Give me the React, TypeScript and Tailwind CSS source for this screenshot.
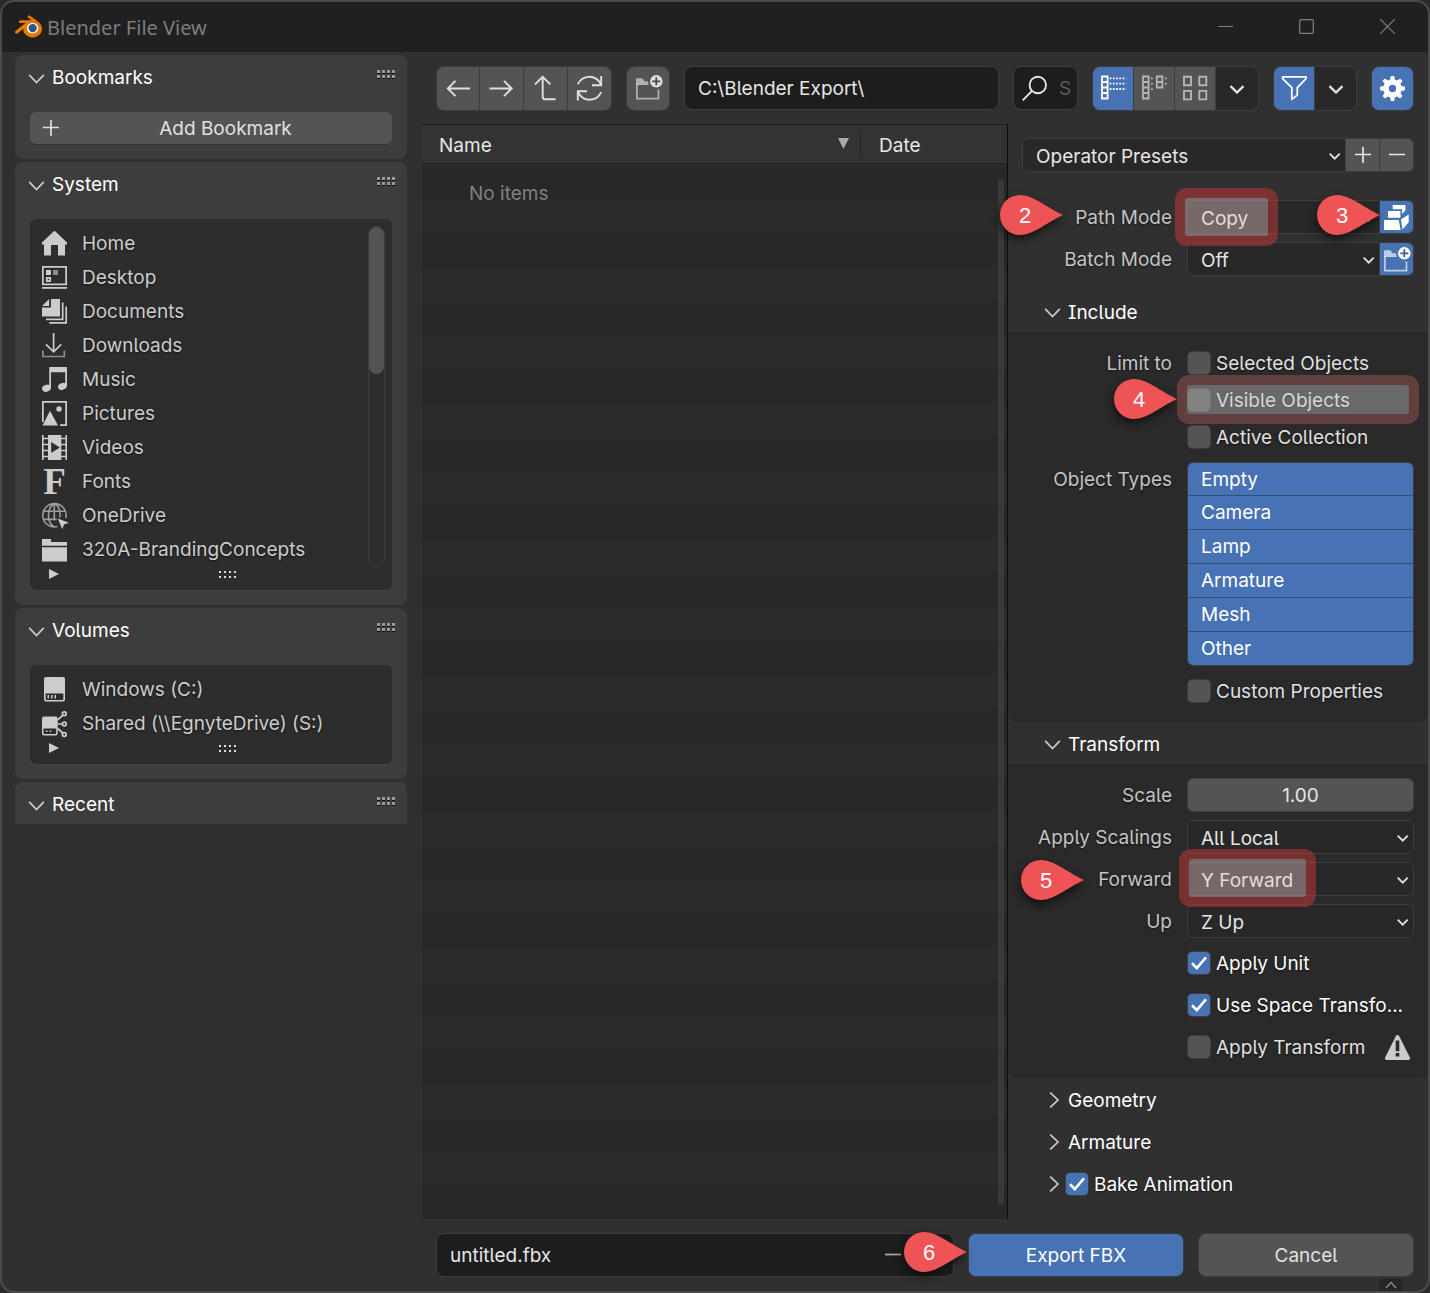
import React, { useState } from "react";

type IconProps = { className?: string };

/* ---------- Icons ---------- */

const Chevron = ({ className = "" }: IconProps) => (
  <svg width="16" height="16" viewBox="0 0 16 16" fill="none" stroke="currentColor" strokeWidth="1.7" className={`shrink-0 overflow-visible ${className}`}>
    <path d="M1.2 4.8 8.500 12.600l7.300-7.800" />
  </svg>
);

const ChevronRight = () => (
  <svg width="16" height="16" viewBox="0 0 16 16" fill="none" stroke="currentColor" strokeWidth="1.7" className="shrink-0">
    <path d="M6.200.6 14 8l-7.800 7.400" />
  </svg>
);

const ChevronBold = () => (
  <svg width="16" height="16" viewBox="0 0 16 16" fill="none" stroke="currentColor" strokeWidth="2.3">
    <path d="M1.500 6.200 8 12.500 14.500 6.200" />
  </svg>
);

const ChevronSmall = ({ className = "" }: IconProps) => (
  <svg width="12" height="12" viewBox="0 0 12 12" fill="none" stroke="currentColor" strokeWidth="1.9" className={className}>
    <path d="M.7 3.700l5 5 5-5" />
  </svg>
);

const Plus = () => (
  <svg width="16" height="16" viewBox="0 0 16 16" fill="none" stroke="currentColor" strokeWidth="1.7">
    <path d="M8 0v16M0 7.500h16" />
  </svg>
);

const Minus = () => (
  <svg width="16" height="16" viewBox="0 0 16 16" fill="none" stroke="currentColor" strokeWidth="1.7">
    <path d="M0 7.500h16" />
  </svg>
);

const BlenderLogo = () => (
  <svg width="27" height="27" viewBox="0 0 24 24" aria-hidden="true" className="mb-[2px]">
    <circle cx="15.700" cy="13.300" r="6.200" fill="#fff" />
    <circle cx="15.700" cy="13.400" r="3.700" fill="#265787" />
    <path
      fill="#ea7600"
      fillRule="evenodd"
      d="M7.350 14.831c.006.314.106.922.256 1.398a7.372 7.372 0 0 0 1.593 2.757 8.227 8.227 0 0 0 2.787 2.001 8.947 8.947 0 0 0 3.660.760 8.964 8.964 0 0 0 3.657-.772 8.285 8.285 0 0 0 2.785-2.010 7.428 7.428 0 0 0 1.592-2.762 6.964 6.964 0 0 0 .250-3.074 7.123 7.123 0 0 0-1.016-2.779 7.764 7.764 0 0 0-1.852-2.043h.002L13.566 2.550l-.020-.015c-.492-.378-1.319-.376-1.860.002-.547.382-.609 1.015-.123 1.415l-.001.001 3.126 2.543-9.530.010h-.013c-.788.001-1.545.518-1.695 1.172-.154.665.380 1.217 1.200 1.220V8.900l4.830-.010-8.620 6.617-.034.025c-.813.622-1.075 1.658-.563 2.313.520.667 1.625.668 2.447.004L7.414 14s-.069.520-.063.831zm12.090 1.741c-.970.988-2.326 1.548-3.795 1.550-1.470.004-2.827-.552-3.797-1.538a4.510 4.510 0 0 1-1.036-1.622 4.282 4.282 0 0 1 .282-3.519 4.702 4.702 0 0 1 1.153-1.371c.942-.768 2.141-1.183 3.396-1.185 1.256-.002 2.455.410 3.398 1.175.480.391.870.854 1.152 1.367a4.280 4.280 0 0 1 .522 1.706 4.236 4.236 0 0 1-.239 1.811 4.540 4.540 0 0 1-1.035 1.626"
    />
  </svg>
);

const Icon25 = ({ children }: { children: React.ReactNode }) => (
  <svg width="25" height="25" viewBox="0 0 25 25" className="shrink-0 overflow-visible" aria-hidden="true">
    {children}
  </svg>
);

const HomeIcon = () => (
  <Icon25>
    <path fill="currentColor" d="M11.300.700a1.700 1.700 0 0 1 2.400 0L25 11.600V13.500h-2V24.600h-7V14H9v10.600H2V13.500H0v-1.900z" />
  </Icon25>
);

const DesktopIcon = () => (
  <Icon25>
    <path fill="none" stroke="currentColor" strokeWidth="1.700" d="M.85 1.850h23.300v17.500H.85z" />
    <path fill="currentColor" d="M4 5h5v5H4zM0 22h25v1.700H0z" />
    <path fill="currentColor" opacity=".6" d="M11 5h5v5h-5z" />
    <path fill="none" stroke="currentColor" strokeWidth="1.700" d="M4.800 12.800h3.400v3.400H4.800z" />
  </Icon25>
);

const DocumentsIcon = () => (
  <Icon25>
    <path fill="currentColor" d="M9 0h9V17.500H0V8.500h9zM0 7l7.200-7v7z" />
    <path fill="none" stroke="currentColor" strokeWidth="1.700" d="M20.700 3.500v16.800H4M24.200 7.500v16.300H7.300" />
  </Icon25>
);

const DownloadsIcon = () => (
  <Icon25>
    <g fill="none" stroke="currentColor" strokeWidth="1.700">
      <path d="M11.600 0v19M4 11.300l7.600 7.500 7.600-7.500" />
      <path opacity=".6" d="M.850 17.500v6h21.500v-6" />
    </g>
  </Icon25>
);

const MusicIcon = () => (
  <Icon25>
    <path fill="currentColor" d="M7.300 0H25v19h-1.800V5.300H9V21H7.300z" />
    <ellipse cx="4.500" cy="21.200" rx="4.500" ry="3.400" fill="currentColor" transform="rotate(-20 4.500 21.200)" />
    <ellipse cx="20.400" cy="19.400" rx="4.500" ry="3.400" fill="currentColor" transform="rotate(-20 20.400 19.400)" />
  </Icon25>
);

const PicturesIcon = () => (
  <Icon25>
    <path fill="none" stroke="currentColor" strokeWidth="1.700" d="M.850 21V.850h23.300v23.300H18" />
    <path fill="currentColor" d="M8 9.800 16 24.500H.5z" />
    <circle cx="17" cy="8" r="2.700" fill="currentColor" />
  </Icon25>
);

const VideosIcon = () => (
  <Icon25>
    <path fill="currentColor" fillRule="evenodd" d="M6 0h13.300v25H6zM9.200 7v11l8.600-5.500z" />
    <path fill="none" stroke="currentColor" strokeWidth="1.600" d="M.8 0v25M24.200 0v25M0 3.500h6M0 9.500h6M0 15.500h6M0 21.500h6M19 3.500h6M19 9.500h6M19 15.500h6M19 21.500h6" />
  </Icon25>
);

const FontsIcon = () => (
  <span aria-hidden="true" className="flex h-[25px] w-[25px] items-center justify-center font-['Liberation_Serif',serif] text-[37px] leading-none font-bold [text-shadow:none]">
    F
  </span>
);

const GlobeIcon = () => (
  <Icon25>
    <g fill="none" stroke="currentColor" strokeWidth="1.600" opacity=".7">
      <path d="M15.500 23.600A11.700 11.700 0 1 1 23.800 15M1.500 8.200h21.600M1.500 16.400h13.200M12.300.8v15M17.800 14.500C18.700 8.500 17 2.500 12.300.800 4.500 5 4.500 19.500 12.300 24" />
    </g>
    <path fill="currentColor" d="M15.800 15.500l11 4.200-4.800 1.800-1.800 4.800z" />
  </Icon25>
);

const FolderIcon = () => (
  <Icon25>
    <path fill="currentColor" d="M0 2h9V5h16v3.700H0zM0 10.200h25V24.500H0z" />
  </Icon25>
);

const DiskIcon = () => (
  <Icon25>
    <path fill="currentColor" fillRule="evenodd" d="M4 0h17a2 2 0 0 1 2 2v20.600a2 2 0 0 1-2 2H4a2 2 0 0 1-2-2V2a2 2 0 0 1 2-2zM3.600 16.500v5.300a1.200 1.200 0 0 0 1.200 1.200h15.400a1.200 1.200 0 0 0 1.200-1.200v-5.300z" />
    <path fill="currentColor" d="M5.500 18h1.500v3.400H5.500zM9 18h1.500v3.400H9zM12.500 18H14v3.400h-1.500z" />
  </Icon25>
);

const SharedDiskIcon = () => (
  <Icon25>
    <path fill="currentColor" fillRule="evenodd" d="M2 5.500h11.700a2 2 0 0 1 2 2v15a2 2 0 0 1-2 2H2a2 2 0 0 1-2-2v-15a2 2 0 0 1 2-2zM1.500 17.500v4.500a1 1 0 0 0 1 1h10.700a1 1 0 0 0 1-1v-4.500z" />
    <path fill="currentColor" d="M3.800 19.400h1.600V21H3.800zM7.600 19.400h1.600V21H7.600z" />
    <g fill="none" stroke="currentColor" strokeWidth="1.700">
      <path d="M15.700 8.800l5-4.500M15.700 13h4.600M15.700 17.500l5 4.500" />
      <circle cx="22.300" cy="2.800" r="1.900" />
      <circle cx="22.300" cy="13" r="1.900" />
      <circle cx="22.300" cy="23.500" r="1.900" />
    </g>
  </Icon25>
);

const ArrowLeftIcon = () => (
  <Icon25>
    <path fill="none" stroke="currentColor" strokeWidth="1.900" d="M24 12.500H2M9.500 4.800 1.800 12.500l7.700 7.700" />
  </Icon25>
);

const ArrowRightIcon = () => (
  <Icon25>
    <path fill="none" stroke="currentColor" strokeWidth="1.900" d="M.5 12.500h22M15 4.800l7.700 7.700-7.700 7.700" />
  </Icon25>
);

const ParentIcon = () => (
  <Icon25>
    <path fill="none" stroke="currentColor" strokeWidth="1.900" d="M9.700 1v19.800a2.500 2.500 0 0 0 2.500 2.500H22.500M2 8.400 9.700.800l7.700 7.600" />
  </Icon25>
);

const RefreshIcon = () => (
  <Icon25>
    <path fill="none" stroke="currentColor" strokeWidth="1.900" d="M.8 8.200C5.500-1.500 18.500-1.800 24 8.300M24.200 0v9.200H15M24.200 16.200C19.500 26.200 6.500 26.500 1 16.100M.8 24.500v-9.200H10" />
  </Icon25>
);

const NewFolderIcon = ({ plus }: { plus: string }) => (
  <svg width="27" height="25" viewBox="0 0 27 25" aria-hidden="true" className="shrink-0">
    <path fill="currentColor" opacity=".65" d="M0 3.300h6.500l1.800 3h3.500l1 3.600H0z" />
    <path fill="none" stroke="currentColor" strokeWidth="1.700" opacity=".65" d="M.9 9v14.700h21.600V14.500" />
    <circle cx="20.300" cy="6.300" r="6.200" fill="currentColor" />
    <path d="M20.300 2.300v8M16.300 6.300h8" strokeWidth="1.800" fill="none" className={plus} />
  </svg>
);

const SearchIcon = () => (
  <Icon25>
    <g fill="none" stroke="currentColor" strokeWidth="1.900">
      <circle cx="15.800" cy="9" r="8.200" />
      <path d="M10 14.800.7 24.300" />
    </g>
  </Icon25>
);

const ListViewIcon = () => (
  <Icon25>
    <path fill="none" stroke="currentColor" strokeWidth="1.800" d="M1 .5h5.600v22H1zM1 6h5.600M1 11.500h5.600M1 17h5.600" />
    <path fill="none" stroke="currentColor" strokeWidth="1.800" strokeDasharray="1.700 1.500" d="M8.700 2.300H25M8.700 7.700H25M8.700 13H25" />
  </Icon25>
);

const DetailViewIcon = () => (
  <Icon25>
    <path fill="none" stroke="currentColor" strokeWidth="1.800" d="M1 .5h5.600v22H1zM1 6h5.600M1 11.500h5.600M1 17h5.600M14.800.5h5.600v11h-5.600zM14.800 6h5.600" />
    <path fill="currentColor" d="M9 1.500h1.800v1.800H9zM9 6.800h1.800v1.800H9zM9 12.200h1.800V14H9zM22.900 1.500h1.800v1.800h-1.800zM22.900 6.800h1.800v1.800h-1.800z" />
  </Icon25>
);

const ThumbViewIcon = () => (
  <Icon25>
    <path fill="none" stroke="currentColor" strokeWidth="1.900" d="M1 .8h7v8.500H1zM16.300.8h7v8.500h-7zM1 14.900h7v8.500H1zM16.300 14.900h7v8.500h-7z" />
  </Icon25>
);

const FunnelIcon = () => (
  <Icon25>
    <path fill="none" stroke="currentColor" strokeWidth="1.800" strokeLinejoin="round" d="M.6.800h23.400v1.800L15.300 11.600v7.500L9.800 23.400V11.600L.6 2.600z" />
  </Icon25>
);

const GearIcon = () => (
  <Icon25>
    <circle cx="12.500" cy="12.500" r="6.500" fill="none" stroke="currentColor" strokeWidth="5.600" />
    {[0, 45, 90, 135, 180, 225, 270, 315].map((a) => (
      <path key={a} fill="currentColor" d="M10 4.500 10.600.8a.8.8 0 0 1 .8-.8h2.200a.8.8 0 0 1 .8.8l.6 3.700z" transform={`rotate(${a} 12.500 12.500)`} />
    ))}
  </Icon25>
);

const EmbedIcon = () => (
  <Icon25>
    <path fill="currentColor" d="M8.700 0h12.700v5.500l-3.400 3.300v-4.500H8.700zM4 6h12.400v6.700H4zM0 15h14.800l1.800 10H0zM17 14.500l7.700-5V17.200L18.500 24.500z" />
  </Icon25>
);

const WarningIcon = () => (
  <Icon25>
    <path fill="currentColor" fillRule="evenodd" d="M10.900 1a1.800 1.800 0 0 1 3.200 0L24.900 22.500a1.700 1.700 0 0 1-1.500 2.500H1.600a1.700 1.700 0 0 1-1.500-2.500zM10.700 5.500v10.700h3.600V5.500zm0 12.400v3.600h3.600v-3.600z" />
  </Icon25>
);

/* ---------- Annotations ---------- */

function Callout({ n, className }: { n: number; className: string }) {
  return (
    <div className={`pointer-events-none absolute z-20 h-10 w-[63px] ${className}`}>
      <svg width="63" height="40" viewBox="0 0 63 40" className="absolute inset-0 overflow-visible drop-shadow-[-1px_4px_4px_rgba(0,0,0,0.6)]">
        <path fill="#ee5355" d="M20 0C33 0 46 12 63 20 46 28 33 40 20 40A20 20 0 0 1 20 0z" />
      </svg>
      <span className="absolute inset-y-0 left-0 flex w-[50px] items-center justify-center font-['Liberation_Sans',sans-serif] text-[22px] text-white [text-shadow:none]">{n}</span>
    </div>
  );
}

/* ---------- Sidebar ---------- */

function Grip() {
  return (
    <div className="grid grid-cols-4 gap-[2px]">
      {Array.from({ length: 8 }, (_, i) => (
        <i key={i} className="h-[3px] w-[3px] bg-[#999] shadow-[0_1px_0_#111]" />
      ))}
    </div>
  );
}

function Panel({ title, open = true, children }: { title: string; open?: boolean; children?: React.ReactNode }) {
  return (
    <section className={`bg-[#3d3d3d] ${open ? "rounded-lg pb-[15px]" : "rounded-t-lg"}`}>
      <header className="flex h-[42px] items-start pr-3 pl-[13px]">
        <button className="flex flex-1 items-center gap-2 pt-2 text-left text-white">
          <Chevron className="text-[#ccc]" />
          <h2>{title}</h2>
        </button>
        <div className="pt-[15px]">
          <Grip />
        </div>
      </header>
      {children && <div className="px-[15px] pt-[15px]">{children}</div>}
    </section>
  );
}

function FileLinks({ items, scroll }: { items: { label: string; icon: React.ReactNode }[]; scroll?: boolean }) {
  return (
    <div className="rounded-md bg-[#2d2d2d] pt-[7px] shadow-[0_1px_0_#444]">
      <div className="flex">
        <ul className="flex-1">
          {items.map((it) => (
            <li key={it.label}>
              <a href="#" className="flex h-[34px] items-center gap-[15px] pl-3 text-[#ccc]">
                {it.icon}
                <span>{it.label}</span>
              </a>
            </li>
          ))}
        </ul>
        {scroll && (
          <div className="mr-[7px] w-[17px] rounded-full border border-[#3d3d3d]">
            <div className="h-[147px] rounded-full bg-[#545454]" />
          </div>
        )}
      </div>
      <div className="flex h-6 items-start pt-[3px] pl-[18px]">
        <svg width="12" height="10" viewBox="0 0 12 10" className="text-[#ccc]">
          <path fill="currentColor" d="M1 0l10 5L1 10z" />
        </svg>
        <div className="ml-[159px] grid grid-cols-4 gap-[3px] pt-[2px]">
          {Array.from({ length: 8 }, (_, i) => (
            <i key={i} className="h-[2px] w-[2px] bg-[#ddd]" />
          ))}
        </div>
      </div>
    </div>
  );
}

const systemItems = [
  { label: "Home", icon: <HomeIcon /> },
  { label: "Desktop", icon: <DesktopIcon /> },
  { label: "Documents", icon: <DocumentsIcon /> },
  { label: "Downloads", icon: <DownloadsIcon /> },
  { label: "Music", icon: <MusicIcon /> },
  { label: "Pictures", icon: <PicturesIcon /> },
  { label: "Videos", icon: <VideosIcon /> },
  { label: "Fonts", icon: <FontsIcon /> },
  { label: "OneDrive", icon: <GlobeIcon /> },
  { label: "320A-BrandingConcepts", icon: <FolderIcon /> },
];

const volumeItems = [
  { label: "Windows (C:)", icon: <DiskIcon /> },
  { label: "Shared (\\\\EgnyteDrive) (S:)", icon: <SharedDiskIcon /> },
];

/* ---------- Form parts ---------- */

function Row({ label, htmlFor, children }: { label: string; htmlFor: string; children: React.ReactNode }) {
  return (
    <div className="grid grid-cols-[150px_1fr] gap-[15px]">
      <label htmlFor={htmlFor} className="self-center text-right whitespace-nowrap text-[#c4c4c4]">
        {label}
      </label>
      {children}
    </div>
  );
}

function Select({ id, value, label, joined }: { id: string; value: string; label?: string; joined?: boolean }) {
  return (
    <div className="relative min-w-0 flex-1">
      <select
        id={id}
        aria-label={label}
        defaultValue={value}
        className={`h-[34px] w-full appearance-none border border-[#3d3d3d] bg-[#282828] pt-[2px] pr-8 pl-[13px] text-[#e6e6e6] ${joined ? "rounded-l-md" : "rounded-md"}`}
      >
        <option>{value}</option>
      </select>
      <ChevronSmall className="pointer-events-none absolute top-3 right-[5px] text-[#e0e0e0]" />
    </div>
  );
}

function Check({ label, checked = false, bright }: { label: string; checked?: boolean; bright?: boolean }) {
  const [on, setOn] = useState(checked);
  return (
    <label className={`flex h-6 items-center gap-[5px] whitespace-nowrap ${bright ? "text-white" : "text-[#e0e0e0]"}`}>
      <span className="relative h-6 w-6">
        <input
          type="checkbox"
          checked={on}
          onChange={() => setOn(!on)}
          className="block h-6 w-6 appearance-none rounded-[5px] border border-[#3d3d3d] bg-[#545454] checked:bg-[#4772b3]"
        />
        {on && (
          <svg width="24" height="24" viewBox="0 0 24 24" className="pointer-events-none absolute inset-0">
            <path fill="none" stroke="#fff" strokeWidth="2.600" d="M5 12.300l4.800 4.700L19 6.300" />
          </svg>
        )}
      </span>
      {label}
    </label>
  );
}

function SectionHeader({ title, open, children }: { title?: string; open?: boolean; children?: React.ReactNode }) {
  return (
    <div className="flex h-[42px] items-center pt-[2px] pl-9 text-white">
      <button className="flex items-center gap-2" aria-label={title ? undefined : "Expand Bake Animation"}>
        <span className="text-[#ccc]">{open ? <Chevron /> : <ChevronRight />}</span>
        {title}
      </button>
      {children}
    </div>
  );
}

const toolButton = "flex h-[43px] items-center justify-center bg-[#545454] text-[#e0e0e0]";
const group = "flex shrink-0 gap-px overflow-hidden rounded-lg border border-[#3d3d3d] bg-[#3d3d3d]";
const objectTypes = ["Empty", "Camera", "Lamp", "Armature", "Mesh", "Other"];

export default function App() {
  return (
    <div className="bg-[#2b2b2b]">
      <div className="flex min-h-screen flex-col overflow-hidden rounded-[14px] border-2 border-[#4b4b4b] bg-[#303030] font-['Inter',sans-serif] text-[19px] leading-[29px] text-[#e6e6e6] [font-feature-settings:'cv05','cv08'] [text-shadow:0_1px_2px_rgba(0,0,0,0.6)]">
        {/* Title bar */}
        <header className="flex h-[50px] shrink-0 items-center bg-[#202020] pl-[13px] text-[#7d7d7d] [text-shadow:none]">
          <BlenderLogo />
          <h1 className="flex-1 pl-[5px] font-['Noto_Sans',sans-serif] text-[20px]">Blender File View</h1>
          <button aria-label="Minimize" className="flex h-full w-[81px] items-center justify-center">
            <svg width="15" height="15" viewBox="0 0 15 15" fill="none" stroke="currentColor"><path d="M0 6.500h15" /></svg>
          </button>
          <button aria-label="Maximize" className="flex h-full w-[81px] items-center justify-center pb-px">
            <svg width="15" height="15" viewBox="0 0 15 15" fill="none" stroke="currentColor" strokeWidth="1.300"><rect x=".7" y=".7" width="13.600" height="13.600" rx="1.200" /></svg>
          </button>
          <button aria-label="Close" className="flex h-full w-[81px] items-center justify-center pb-px">
            <svg width="15" height="15" viewBox="0 0 15 15" fill="none" stroke="currentColor" strokeWidth="1.200"><path d="M0 0l15 15M15 0 0 15" /></svg>
          </button>
        </header>

        <div className="flex flex-1">
          {/* Sidebar */}
          <aside className="flex w-[420px] shrink-0 flex-col gap-[3px] pt-[3px] pr-[15px] pl-[13px]">
            <Panel title="Bookmarks">
              <button className="flex h-8 w-full items-center rounded-md bg-[#545454] pl-[13px] text-[#e0e0e0] shadow-[0_1px_1px_#333]">
                <Plus />
                <span className="flex-1 text-center">Add Bookmark</span>
              </button>
            </Panel>
            <Panel title="System">
              <FileLinks items={systemItems} scroll />
            </Panel>
            <Panel title="Volumes">
              <FileLinks items={volumeItems} />
            </Panel>
            <Panel title="Recent" open={false} />
          </aside>

          <main className="flex min-w-0 flex-1 flex-col">
            {/* Toolbar */}
            <div className="flex h-[72px] shrink-0 items-center gap-[14px] pr-[14px] pl-[14px]">
              <div className={group}>
                <button aria-label="Back" className={`${toolButton} w-[42px]`}><ArrowLeftIcon /></button>
                <button aria-label="Forward" className={`${toolButton} w-[43px]`}><ArrowRightIcon /></button>
                <button aria-label="Parent folder" className={`${toolButton} w-[43px]`}><ParentIcon /></button>
                <button aria-label="Refresh" className={`${toolButton} w-[43px]`}><RefreshIcon /></button>
              </div>
              <div className={group}>
                <button aria-label="New folder" className={`${toolButton} w-[42px] pb-px pl-[2px]`}><NewFolderIcon plus="stroke-[#444]" /></button>
              </div>
              <input
                aria-label="Directory"
                defaultValue="C:\Blender Export\"
                className="h-[44px] min-w-0 flex-1 rounded-lg border border-[#3d3d3d] bg-[#1d1d1d] px-[13px]"
              />
              <label className="flex h-[44px] w-[65px] shrink-0 items-center gap-3 overflow-hidden rounded-lg border border-[#3d3d3d] bg-[#1d1d1d] pl-2">
                <SearchIcon />
                <input aria-label="Search" placeholder="S" className="w-4 min-w-0 bg-transparent placeholder:text-[#5c5c5c]" />
              </label>
              <div className={group}>
                <button aria-label="Vertical list" className="flex h-[43px] w-10 items-center justify-center bg-[#4772b3] text-white"><ListViewIcon /></button>
                <button aria-label="Horizontal list" className="flex h-[43px] w-10 items-center justify-center bg-[#545454] text-[#b5b5b5]"><DetailViewIcon /></button>
                <button aria-label="Thumbnails" className="flex h-[43px] w-10 items-center justify-center bg-[#545454] text-[#b5b5b5]"><ThumbViewIcon /></button>
                <button aria-label="Display settings" className="flex h-[43px] w-[42px] items-center justify-center bg-[#282828]"><ChevronBold /></button>
              </div>
              <div className={group}>
                <button aria-label="Filter" className="flex h-[43px] w-10 items-center justify-center bg-[#4772b3] text-white"><FunnelIcon /></button>
                <button aria-label="Filter settings" className="flex h-[43px] w-[41px] items-center justify-center bg-[#282828]"><ChevronBold /></button>
              </div>
              <div className={group}>
                <button aria-label="Toggle region" className="flex h-[43px] w-[41px] items-center justify-center bg-[#4772b3] text-white"><GearIcon /></button>
              </div>
            </div>

            <div className="flex flex-1">
              {/* File list */}
              <section className="relative min-w-0 flex-1 border-r border-[#0c0c0c] bg-[repeating-linear-gradient(to_bottom,#282828_0_8px,#2b2b2b_8px_42px,#282828_42px_68px)]">
                <table className="w-full border-separate border-spacing-0 text-left">
                  <thead>
                    <tr className="h-10 bg-[#333]">
                      <th scope="col" className="border-y border-[#1e1e1e] p-0 pt-[2px] pl-[17px] font-normal">
                        <div className="flex items-center justify-between">
                          <button>Name</button>
                          <span className="flex h-6 items-center border-r border-[#222] pr-[11px]">
                            <svg width="11" height="11" viewBox="0 0 11 11" className="mb-1"><path fill="#aaa" d="M0 0h11L5.500 11z" /></svg>
                          </span>
                        </div>
                      </th>
                      <th scope="col" className="w-[146px] border-y border-[#1e1e1e] p-0 pt-[2px] pl-[18px] font-normal">
                        <button className="block">Date</button>
                      </th>
                    </tr>
                  </thead>
                  <tbody>
                    <tr>
                      <td colSpan={2} className="p-0 pt-[15px] pl-[47px] text-[#808080] [text-shadow:none]">No items</td>
                    </tr>
                  </tbody>
                </table>
                <div className="absolute top-[55px] right-[3px] bottom-[14px] w-[6px] rounded-full bg-[#3a3a3a]" />
              </section>

              {/* Operator settings */}
              <section className="relative w-[420px] shrink-0 pt-[14px]">
                <div className="flex px-[14px]">
                  <Select id="presets" label="Operator Presets" value="Operator Presets" joined />
                  <button aria-label="Add preset" className="flex h-[34px] w-[34px] items-center justify-center border-y border-r border-[#3d3d3d] bg-[#545454]"><Plus /></button>
                  <button aria-label="Remove preset" className="flex h-[34px] w-[34px] items-center justify-center rounded-r-md border-y border-r border-[#3d3d3d] bg-[#545454]"><Minus /></button>
                </div>

                <div className="mt-7 mb-[14px] flex flex-col gap-2 px-[14px]">
                  <div className="relative">
                    <Callout n={2} className="-top-[5px] -left-[22px]" />
                    <Row label="Path Mode" htmlFor="path-mode">
                      <div className="relative flex">
                        <Select id="path-mode" value="Copy" joined />
                        <button aria-label="Embed textures" className="flex h-[34px] w-[34px] items-center justify-center rounded-r-md border-y border-r border-[#3d3d3d] bg-[#4772b3] text-white"><EmbedIcon /></button>
                        <div className="pointer-events-none absolute -top-3 -left-3 z-10 h-[58px] w-[103px] rounded-xl border-[10px] border-[#ef3a3c]/40 bg-[#ebc8c8]/40 bg-clip-padding" />
                        <Callout n={3} className="-top-[5px] left-[130px]" />
                      </div>
                    </Row>
                  </div>
                  <Row label="Batch Mode" htmlFor="batch-mode">
                    <div className="flex">
                      <Select id="batch-mode" value="Off" joined />
                      <button aria-label="Batch own directory" className="flex h-[34px] w-[34px] items-center justify-center rounded-r-md border-y border-r border-[#3d3d3d] bg-[#4772b3] pl-[2px] text-white"><NewFolderIcon plus="stroke-[#3a5f98]" /></button>
                    </div>
                  </Row>
                </div>

                <SectionHeader title="Include" open />
                <div className="flex flex-col gap-[13px] rounded-b-lg bg-[#2a2a2a] px-[14px] py-[19px]">
                  <div className="grid grid-cols-[150px_1fr] gap-x-[15px]">
                    <span className="text-right leading-[25px] text-[#c4c4c4]">Limit to</span>
                    <div className="flex flex-col gap-[13px]">
                      <Check label="Selected Objects" />
                      <div className="relative">
                        <Check label="Visible Objects" />
                        <div className="pointer-events-none absolute -top-[13px] -right-[5px] -left-[10px] z-10 h-[49px] rounded-xl border-[10px] border-[#e07070]/30 bg-[#c8c8c8]/40 bg-clip-padding" />
                        <Callout n={4} className="-top-[9px] -left-[73px]" />
                      </div>
                      <Check label="Active Collection" />
                    </div>
                  </div>
                  <div className="grid grid-cols-[150px_1fr] gap-x-[15px]">
                    <span className="pt-[3px] text-right text-[#c4c4c4]">Object Types</span>
                    <div className="flex flex-col overflow-hidden rounded-md border border-[#3d3d3d]">
                      {objectTypes.map((t) => (
                        <button key={t} aria-pressed="true" className="h-[34px] border-b border-[#33507c] bg-[#4772b3] pl-[13px] text-left text-white first:h-[33px] last:h-[33px] last:border-b-0">
                          {t}
                        </button>
                      ))}
                    </div>
                  </div>
                  <div className="pl-[165px]">
                    <Check label="Custom Properties" />
                  </div>
                </div>

                <SectionHeader title="Transform" open />
                <div className="flex flex-col gap-2 rounded-b-lg bg-[#2a2a2a] px-[14px] py-[14px]">
                  <Row label="Scale" htmlFor="scale">
                    <input id="scale" defaultValue="1.00" className="h-[34px] w-full min-w-0 rounded-md border border-[#3d3d3d] bg-[#545454] text-center" />
                  </Row>
                  <Row label="Apply Scalings" htmlFor="scalings">
                    <Select id="scalings" value="All Local" />
                  </Row>
                  <div className="relative">
                    <Callout n={5} className="-top-[2px] -left-px" />
                    <Row label="Forward" htmlFor="forward">
                      <div className="relative flex">
                        <Select id="forward" value="Y Forward" />
                        <div className="pointer-events-none absolute -top-[13px] -left-2 z-10 h-[58px] w-[137px] rounded-xl border-[10px] border-[#ef3a3c]/40 bg-[#ebc8c8]/40 bg-clip-padding" />
                      </div>
                    </Row>
                  </div>
                  <Row label="Up" htmlFor="up">
                    <Select id="up" value="Z Up" />
                  </Row>
                  <div className="flex flex-col gap-2 pl-[165px]">
                    <div className="flex h-[34px] items-center"><Check label="Apply Unit" checked bright /></div>
                    <div className="flex h-[34px] items-center"><Check label="Use Space Transfo..." checked bright /></div>
                    <div className="flex h-[34px] items-center justify-between pr-1 text-[#ccc]">
                      <Check label="Apply Transform" />
                      <WarningIcon />
                    </div>
                  </div>
                </div>

                <SectionHeader title="Geometry" />
                <SectionHeader title="Armature" />
                <SectionHeader>
                  <div className="ml-[5px]"><Check label="Bake Animation" checked bright /></div>
                </SectionHeader>
              </section>
            </div>

            {/* File name and actions */}
            <footer className="relative flex h-[72px] shrink-0 items-center gap-[14px] px-[14px]">
              <div className="relative flex h-11 min-w-0 flex-1 items-center rounded-lg border border-[#3d3d3d] bg-[#1d1d1d] pr-[5px]">
                <input aria-label="File name" defaultValue="untitled.fbx" className="min-w-0 flex-1 bg-transparent pl-[13px]" />
                <button aria-label="Decrease number" className="flex w-[37px] justify-center text-[#aaa]"><Minus /></button>
                <button aria-label="Increase number" className="flex w-[37px] justify-center text-[#aaa]"><Plus /></button>
                <Callout n={6} className="-top-[2px] -right-[14px]" />
              </div>
              <button className="h-11 w-[216px] rounded-lg border border-[#3d3d3d] bg-[#4772b3] text-white">Export FBX</button>
              <button className="h-11 w-[216px] rounded-lg border border-[#3d3d3d] bg-[#545454] text-[#e0e0e0]">Cancel</button>
              <button aria-label="Show footer" className="absolute right-[25px] bottom-0 flex h-3 w-6 items-center justify-center rounded-t bg-[#262626] text-[#888]">
                <svg width="12" height="8" viewBox="0 0 12 8" fill="none" stroke="currentColor" strokeWidth="1.500"><path d="M1 7l5-5.500L11 7" /></svg>
              </button>
            </footer>
          </main>
        </div>
      </div>
    </div>
  );
}
